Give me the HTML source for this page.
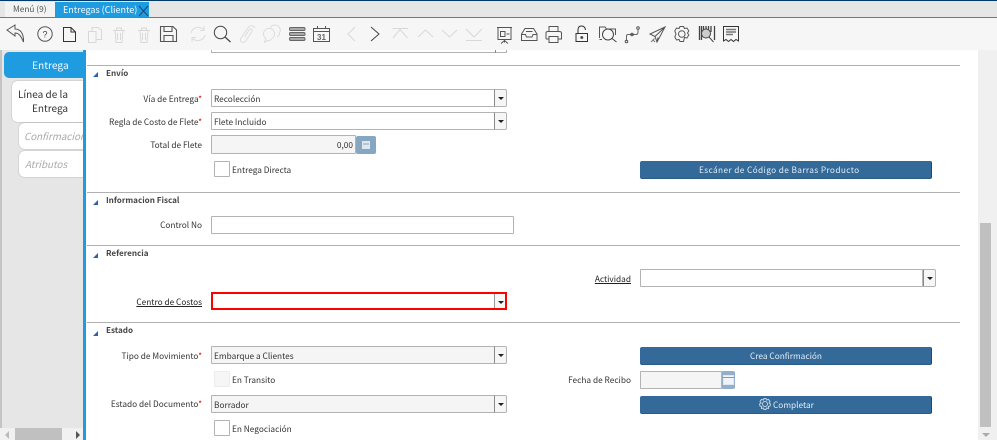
<!DOCTYPE html>
<html><head><meta charset="utf-8"><style>
html,body{margin:0;padding:0}
body{width:997px;height:440px;overflow:hidden;background:#fff;position:relative;font-family:"Noto Sans CJK JP","Liberation Sans",sans-serif;font-size:8.3px;color:#333}
div,span{position:absolute;box-sizing:border-box;white-space:nowrap}
.l{text-align:right;line-height:14px;height:14px;color:#333}
.l i{font-style:normal;color:#e00000}
.u{text-decoration:underline;color:#222}
.h{font-weight:bold;color:#444;line-height:12px;font-size:8.1px}
.tri{width:0;height:0;border-left:5px solid transparent;border-bottom:5px solid #2a62b0}
.hr{left:87px;width:873px;height:1px;background:#b0b0b0}
.f{border:1px solid #b3b3b3;background:#fff;border-radius:1px;line-height:18px;padding-left:2px;color:#333}
.ro{background:#f5f5f5}
.dd{width:13px;border:1px solid #b3b3b3;border-left:1px solid #8a8a8a;background:#f6f6f6;border-radius:0 2px 2px 0}
.dd:after{content:"";position:absolute;left:2.500px;top:7px;border-left:3px solid transparent;border-right:3px solid transparent;border-top:3px solid #222}
.cb{width:16px;height:16px;border:1px solid #b3b3b3;background:#fff;border-radius:1px}
.btn{background:#336a99;border-radius:2px;color:#e4edf4;line-height:18px;height:18px;left:640px;width:292px;border-right:1px solid #1e4a70;border-bottom:1px solid #2b5c86}
.tab{border-radius:5px 0 0 5px;background:#fff}
</style></head><body>
<div style="left:0;top:0;width:997px;height:1px;background:#003a6b"></div>
<div style="left:0;top:1px;width:997px;height:16px;background:#e6e6e6"></div>
<div style="left:5px;top:2px;width:50px;height:15px;background:#f3f3f3;line-height:15px;color:#555;padding-left:8px">Menú (9)</div>
<div style="left:55px;top:2px;width:94px;height:15px;background:#1f9ce0;color:#f2f8fc;line-height:15px;padding-left:8px;font-size:9px">Entregas (Cliente)</div>
<svg style="position:absolute;left:138px;top:4px" width="11" height="13"><path d="M1 2L10 12M10 2L1 12" stroke="#1a4a75" stroke-width="1" fill="none"/></svg>
<div style="left:0;top:17px;width:997px;height:1px;background:#2a8dcc"></div>
<div style="left:0;top:18px;width:997px;height:32px;background:#f6f6f6"></div>

<svg style="position:absolute;left:0;top:18px" width="760" height="32" fill="none" stroke="#555" stroke-width="1">
<path d="M7 12L15 7V11C20 11 24 15 23.500 24C21 18 19 15 15 15V18Z"/>
<circle cx="45" cy="16" r="7.200"/><text x="42.500" y="19.500" font-size="9" font-family="Liberation Sans" fill="#444" stroke="none">?</text>
<path d="M63.500 9.500H71L75.500 14V23.500H63.500ZM71 9.500V14H75.500" stroke="#333"/>
<g stroke="#d8d8d8"><path d="M88.500 13.500H96V24.500H88.500ZM92 13V9.500H98L101.500 12V21.500H96"/>
<path d="M113 12.500H125M115 12.500L116 24.500H122L123 12.500M116.500 12.500V10H121.500V12.500M117.500 15V22M120.500 15V22"/>
<path d="M138 12.500H150M140 12.500L141 24.500H147L148 12.500M141.500 12.500V10H146.500V12.500M142.500 15V22M145.500 15V22"/></g>
<path d="M160.500 8.500H173L176.500 12V23.500H160.500ZM164 8.500V13.500H172V8.500M164 23.500V17.500H173V23.500" stroke-width="1.100"/>
<g stroke="#dcdcdc"><path d="M191 15C192 10 199 7 204 12M204 8V12.500H200M205 17C204 22 197 25 192 20M192 24V19.500H196"/>
<path d="M255 10C253 6.500 249.500 7.500 247.500 10.500L241 20C239 24 243.500 26 246 22.500L252 13.500C253 11.500 250.500 10 249 12L244.500 19"/>
<path d="M272 20.500A5.500 5.500 0 1 0 266 20.500L264.500 24L268 22.500Q270 23 272 20.500Z"/><path d="M270.500 9.500A5 5 0 0 1 279.500 15Q279.500 17.500 277 19"/></g>
<circle cx="220.500" cy="14.500" r="6.200" stroke="#444"/><path d="M225 19L230.500 24" stroke="#444" stroke-width="1.200"/>
<g fill="#aaa" stroke="#666"><rect x="289.500" y="9.500" width="15.500" height="3" rx="1.200"/><rect x="289.500" y="14.500" width="15.500" height="3" rx="1.200"/><rect x="289.500" y="19.500" width="15.500" height="3" rx="1.200"/></g>
<path d="M313.500 10.500H329.500V23.500H313.500ZM313.500 13.500H329.500M317.500 8V11M325.500 8V11"/>
<text x="317" y="22" font-size="8" font-weight="bold" font-family="Liberation Sans" fill="#666" stroke="none">31</text>
<g stroke="#d8d8d8"><path d="M355 9L348 16L355 23"/><path d="M392.500 10.500H408M393 20L400 11.500L407.500 20"/><path d="M418 19L425.500 12L433 19"/><path d="M442 12L449.500 19L457 12"/><path d="M466 11L474 19L482 11M466 22.500H482"/></g>
<path d="M371 9L379 16L371 23" stroke="#444"/>
<g stroke="#555"><path d="M497 9.500H512M498 9.500V21.500H511V9.500M504.500 21.500V24.500M501 25.500L504.500 22.500L508 25.500M500.500 13.500H505V18.500H500.500ZM506.500 16H509.500"/></g>
<path d="M521.500 16L525 10.500H533.500L537 16V22.500H521.500ZM521.500 16.500H525.500L526.500 19H532L533 16.500H537M526 13.500H532.500"/>
<path d="M549 14V8.500H558V14M546 21V15Q546 13.500 548 13.500H559Q561.500 13.500 561.500 15V21H558M549 21H546M549 18.500H558V24.500H549Z"/>
<path d="M576 15.500H587.500V23.500H576ZM578 15.500V12Q578 8 581.500 8Q585 8 585.500 12" stroke="#333"/><circle cx="581.800" cy="19.500" r="1" fill="#333"/>
<path d="M599.500 20V9H605L606.500 11H615.500V17M599.500 21.500H602"/><circle cx="608" cy="16.500" r="5.500" stroke="#444"/><path d="M612 20.500L616.500 24" stroke="#444"/>
<path d="M626.500 23V18Q626.500 16.500 628 16.500H636Q638 16.500 638 14V11" stroke="#666"/><circle cx="626.500" cy="23.500" r="1.300"/><circle cx="632" cy="16.500" r="1.300"/><circle cx="638" cy="10" r="1.300"/>
<path d="M665 9L650 16L655 18.500L657 24L665 9ZM665 9L655 18.500M657 24L658 19.500"/><path d="M651 24L654.500 20.500M653 22L655 24" stroke="#777"/>
<path d="M680 8.500H683.500L684.500 10.500L687 10L688.800 13L687.500 15L688.800 17L687 20L684.500 19.500L683.500 23.500H680L679 21.500L676.500 22L674.800 19L676 16L674.800 13L676.500 10L679 10.500Z"/><circle cx="681.800" cy="16" r="3.300"/>
<path d="M699.500 8V22M701.500 8V22M703.500 8V14M706 8V14M708.500 8V14M711 8V14M714.500 8V22" stroke="#444" stroke-width="1.300"/><circle cx="706" cy="15.500" r="4.500" stroke="#444" fill="#ccc"/><path d="M709 19L713.500 24" stroke="#444"/>
<path d="M723.500 8.500H738.500V23L736 21.500L733.500 23.500L731 21.500L728.500 23.500L726 21.500L723.500 23Z" stroke="#333"/><path d="M726 11.500H736M726 14H736M726 16.500H733" stroke="#777" stroke-width="1.400"/>
</svg>

<!-- left panel -->
<div style="left:0;top:50px;width:84px;height:378px;background:#e6e6e6"></div>
<div style="left:0;top:50px;width:2px;height:378px;background:#c4c4c4"></div>
<div style="left:4px;top:52px;width:79px;height:26px;background:#1f9ce0;border-radius:5px 0 0 5px;color:#f4fafd;font-size:10.200px;line-height:26px;padding-left:28px">Entrega</div>
<div class="tab" style="left:12px;top:81px;width:71px;height:41px;box-shadow:0 0 1px #777;font-size:10px;line-height:14px;color:#333"><span style="left:6px;top:6px">Línea de la</span><span style="left:20px;top:20px">Entrega</span></div>
<div class="tab" style="left:19px;top:123px;width:64px;height:26px;overflow:hidden;box-shadow:0 0 1px #777;font-style:italic;font-size:9.800px;line-height:26px;color:#aaa;padding-left:5px">Confirmacion</div>
<div class="tab" style="left:19px;top:151px;width:64px;height:26px;box-shadow:0 0 1px #777;font-style:italic;font-size:9.800px;line-height:26px;color:#aaa;padding-left:6px">Atributos</div>
<div style="left:0;top:428px;width:84px;height:12px;background:#f1f1f1"></div>
<div style="left:15px;top:428px;width:47px;height:12px;background:#c0c0c0"></div>
<div style="left:5px;top:431px;border-right:4px solid #bbb;border-top:4px solid transparent;border-bottom:4px solid transparent"></div>
<div style="left:76px;top:431px;border-left:4px solid #555;border-top:4px solid transparent;border-bottom:4px solid transparent"></div>
<div style="left:83px;top:50px;width:3px;height:390px;background:#1f9ce0"></div>

<!-- stub -->
<div style="left:211px;top:50px;width:296px;height:3px;border:1px solid #b3b3b3;border-top:0"></div>
<div style="left:495px;top:50px;width:1px;height:3px;background:#888"></div>

<div class="hr" style="top:65px"></div><div class="hr" style="top:192px"></div><div class="hr" style="top:245px"></div><div class="hr" style="top:322px"></div>

<div class="tri" style="left:93px;top:72px"></div><div class="h" style="left:106px;top:68px">Envío</div>
<div class="l" style="right:795px;top:92px">Vía de Entrega<i>*</i></div>
<div class="f" style="left:211px;top:89px;width:284px;height:18px">Recolección</div><div class="dd" style="left:494px;top:89px;height:18px"></div>
<div class="l" style="right:795px;top:115px">Regla de Costo de Flete<i>*</i></div>
<div class="f" style="left:211px;top:112px;width:284px;height:18px">Flete Incluido</div><div class="dd" style="left:494px;top:112px;height:18px"></div>
<div class="l" style="right:795px;top:138px">Total de Flete</div>
<div class="f ro" style="left:211px;top:135px;width:145px;height:19px;text-align:right;padding-right:2px;line-height:18px">0,00</div>
<div style="left:356px;top:136px;width:20px;height:18px;background:#86a7c2;border-radius:2px"></div>
<svg style="position:absolute;left:362px;top:141px" width="8" height="8"><path d="M0 0H8V8H0Z" fill="#dfe8ef"/><path d="M1 3H7" stroke="#86a7c2"/></svg>
<div class="cb" style="left:214px;top:161px"></div><div class="l" style="left:232px;top:163px;text-align:left">Entrega Directa</div>
<div class="btn" style="top:161px"><span style="left:59px;letter-spacing:.37px">Escáner de Código de Barras Producto</span></div>

<div class="tri" style="left:93px;top:200px"></div><div class="h" style="left:106px;top:195px">Informacion Fiscal</div>
<div class="l" style="right:795px;top:218px">Control No</div>
<div class="f" style="left:211px;top:216px;width:303px;height:18px"></div>

<div class="tri" style="left:93px;top:253px"></div><div class="h" style="left:106px;top:248px">Referencia</div>
<div class="l u" style="right:366px;top:272px">Actividad</div>
<div class="f" style="left:640px;top:269px;width:283px;height:18px"></div><div class="dd" style="left:923px;top:269px;height:18px"></div>
<div class="l u" style="right:795px;top:295px">Centro de Costos</div>
<div style="left:211px;top:292px;width:296px;height:18px;border:2px solid #f00;background:#fff"></div>
<div class="dd" style="left:494px;top:294px;height:14px;width:11px;border:0;border-left:1px solid #999"></div>

<div class="tri" style="left:93px;top:331px"></div><div class="h" style="left:106px;top:325px">Estado</div>
<div class="l" style="right:795px;top:349px">Tipo de Movimiento<i>*</i></div>
<div class="f ro" style="left:211px;top:346px;width:284px;height:18px">Embarque a Clientes</div><div class="dd" style="left:494px;top:346px;height:18px"></div>
<div class="btn" style="top:347px"><span style="left:110px">Crea Confirmación</span></div>
<div class="cb" style="left:214px;top:371px;background:#f6f6f6;border-color:#ececec"></div><div class="l" style="left:232px;top:373px;text-align:left">En Transito</div>
<div class="l" style="right:366px;top:373px">Fecha de Recibo</div>
<div class="f ro" style="left:640px;top:371px;width:82px;height:18px"></div>
<div style="left:722px;top:371px;width:13px;height:18px;background:#94afc9;border-radius:0 2px 2px 0"></div>
<svg style="position:absolute;left:723px;top:375px" width="11" height="10"><path d="M0.500 0.500H10.500V9.500H0.500Z" fill="#f0f4f7" stroke="#dfe8ef"/><path d="M0 2.500H11" stroke="#7f9cb8"/></svg>
<div class="l" style="right:795px;top:397px">Estado del Documento<i>*</i></div>
<div class="f ro" style="left:211px;top:395px;width:284px;height:18px">Borrador</div><div class="dd" style="left:494px;top:395px;height:18px"></div>
<div class="btn" style="top:396px"><span style="left:133px">Completar</span></div>
<svg style="position:absolute;left:759px;top:398px" width="12" height="12" fill="none" stroke="#c5d4e2"><path d="M5 .5H7L7.500 2L9.500 1.500L11 3.500L10 5L11.500 6L11 8L9.500 8.500L9.500 10.500L7.500 10L7 11.500H5L4.500 10L2.500 10.500L2.500 8.500L1 8L.5 6L2 5L1 3.500L2.500 1.500L4.500 2Z"/><circle cx="6" cy="6" r="2.500"/></svg>
<div class="cb" style="left:214px;top:420px"></div><div class="l" style="left:232px;top:422px;text-align:left">En Negociación</div>

<!-- v scrollbar -->
<div style="left:978px;top:50px;width:19px;height:390px;background:#f0f0f0"></div>
<div style="left:980px;top:223px;width:11px;height:204px;background:#c0c0c0"></div>
<div style="left:982px;top:433px;border-top:4px solid #aaa;border-left:4px solid transparent;border-right:4px solid transparent"></div>
</body></html>
